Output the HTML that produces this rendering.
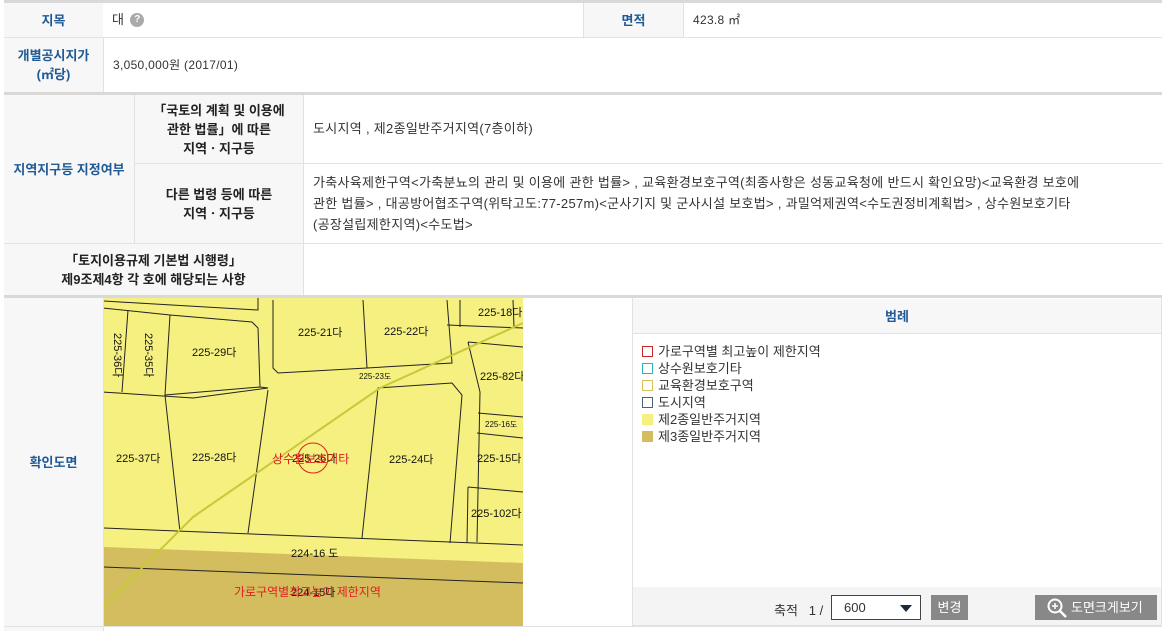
<!DOCTYPE html>
<html><head><meta charset="utf-8"><style>
*{margin:0;padding:0;box-sizing:border-box}
body{width:1168px;height:631px;background:#fff;font-family:"Liberation Sans","Noto Sans CJK KR",sans-serif;font-size:12px;color:#333;position:relative;overflow:hidden}
.a{position:absolute}
.h{position:absolute;background:#f7f7f7;color:#1f5a96;font-weight:bold;font-size:13px;display:flex;align-items:center;justify-content:center;text-align:center;line-height:19px}
.k{position:absolute;background:#f7f7f7;color:#222;font-weight:bold;font-size:13px;display:flex;align-items:center;justify-content:center;text-align:center;line-height:19px}
.v{position:absolute;display:flex;align-items:center;padding-left:9px;font-size:13px;letter-spacing:0.3px;color:#333;line-height:20px}
.hl{position:absolute;background:#e2e2e2}
.sq{display:inline-block;width:11px;height:11px;vertical-align:-1px;margin-right:5px}
.lg div{height:17px;line-height:17px;font-size:13px;color:#333}
</style></head><body>
<div class="hl" style="left:4px;top:0;width:1158px;height:3px;background:#d9d9d9"></div>
<div class="h" style="left:4px;top:3px;width:99px;height:34px">지목</div>
<div class="v" style="left:103px;top:3px;width:480px;height:34px">대 <span style="display:inline-block;width:14px;height:14px;border-radius:7px;background:#aaa;color:#fff;font-size:10px;text-align:center;line-height:14px;margin-left:6px;font-weight:bold;letter-spacing:0">?</span></div>
<div class="h" style="left:583px;top:3px;width:100px;height:34px;border-left:1px solid #e2e2e2">면적</div>
<div class="v" style="left:683px;top:3px;width:479px;height:34px;border-left:1px solid #e2e2e2;font-size:12px">423.8 ㎡</div>
<div class="hl" style="left:4px;top:37px;width:1158px;height:1px"></div>
<div class="h" style="left:4px;top:38px;width:99px;height:54px">개별공시지가<br>(㎡당)</div>
<div class="v" style="left:103px;top:38px;width:1059px;height:54px;border-left:1px solid #e2e2e2;font-size:12px">3,050,000원 (2017/01)</div>
<div class="hl" style="left:4px;top:92px;width:1158px;height:3px;background:#d9d9d9"></div>
<div class="h" style="left:4px;top:95px;width:130px;height:148px">지역지구등 지정여부</div>
<div class="k" style="left:134px;top:95px;width:169px;height:68px;border-left:1px solid #e2e2e2">「국토의 계획 및 이용에<br>관한 법률」에 따른<br>지역ㆍ지구등</div>
<div class="v" style="left:303px;top:95px;width:859px;height:68px;border-left:1px solid #e2e2e2">도시지역 , 제2종일반주거지역(7층이하)</div>
<div class="hl" style="left:134px;top:163px;width:1028px;height:1px"></div>
<div class="k" style="left:134px;top:164px;width:169px;height:79px;border-left:1px solid #e2e2e2">다른 법령 등에 따른<br>지역ㆍ지구등</div>
<div class="v" style="left:303px;top:164px;width:859px;height:79px;border-left:1px solid #e2e2e2;line-height:21px;white-space:nowrap"><div>가축사육제한구역&lt;가축분뇨의 관리 및 이용에 관한 법률&gt; , 교육환경보호구역(최종사항은 성동교육청에 반드시 확인요망)&lt;교육환경 보호에<br>관한 법률&gt; , 대공방어협조구역(위탁고도:77-257m)&lt;군사기지 및 군사시설 보호법&gt; , 과밀억제권역&lt;수도권정비계획법&gt; , 상수원보호기타<br>(공장설립제한지역)&lt;수도법&gt;</div></div>
<div class="hl" style="left:4px;top:243px;width:1158px;height:1px"></div>
<div class="k" style="left:4px;top:244px;width:299px;height:51px">「토지이용규제 기본법 시행령」<br>제9조제4항 각 호에 해당되는 사항</div>
<div class="v" style="left:303px;top:244px;width:859px;height:51px;border-left:1px solid #e2e2e2"></div>
<div class="hl" style="left:4px;top:295px;width:1158px;height:3px;background:#d9d9d9"></div>
<div class="h" style="left:4px;top:298px;width:99px;height:328px">확인도면</div>
<div class="a" style="left:103px;top:298px;width:1px;height:333px;background:#e2e2e2"></div>
<svg class="a" style="left:104px;top:298px" width="419" height="328" viewBox="0 0 419 328" font-family="Liberation Sans, Noto Sans CJK KR, sans-serif" font-size="11">
<rect width="419" height="328" fill="#f5f07f"/>
<polygon points="0,249 419,265 419,328 0,328" fill="#d4bd5f"/>
<g fill="none" stroke="#222" stroke-width="1">
<polyline points="-1,230 419,247"/>
<polyline points="-1,269 419,285"/>
<polyline points="76,234 61,97 66,17"/>
<polyline points="144,235 164,92"/>
<polyline points="258,240 274,90 348,85 358,97 346,245"/>
<polyline points="-1,94 89,100 164,90 156,89"/>
<polyline points="61,97 156,89 154,30 148,24 66,17 -1,10"/>
<polyline points="-1,3 154,12 154,0"/>
<polyline points="24,12 18,94"/>
<polyline points="169,2 169,70 174,75 263,70 348,65 343,2"/>
<polyline points="259,2 263,70"/>
<polyline points="364,44 376,94 373,244"/>
<polyline points="364,44 419,49"/>
<polyline points="343,27 419,30"/>
<polyline points="356,2 356,29"/>
<polyline points="409,2 410,29"/>
<polyline points="374,115 419,119"/>
<polyline points="373,135 419,140"/>
<polyline points="364,189 419,194"/>
<polyline points="364,189 363,245"/>
</g>
<polyline points="-1,309 89,219 276,90 419,25" fill="none" stroke="#c8c83a" stroke-width="2"/>
<g fill="#111">
<text x="374" y="18">225-18다</text>
<text x="194" y="38">225-21다</text>
<text x="280" y="37">225-22다</text>
<text x="88" y="58">225-29다</text>
<text x="255" y="81" font-size="8">225-23도</text>
<text x="376" y="82">225-82다</text>
<text x="381" y="129" font-size="8">225-16도</text>
<text x="12" y="164">225-37다</text>
<text x="88" y="163">225-28다</text>
<text x="188" y="164">225-26다</text>
<text x="285" y="165">225-24다</text>
<text x="373" y="164">225-15다</text>
<text x="367" y="219">225-102다</text>
<text x="187" y="259">224-16 도</text>
<text x="187" y="298">224-15다</text>
<text transform="translate(10,35) rotate(90)">225-36다</text>
<text transform="translate(41,35) rotate(90)">225-35다</text>
</g>
<circle cx="209" cy="160" r="15" fill="none" stroke="#e02020" stroke-width="1"/>
<g fill="#e02020" font-size="12"><text x="168" y="165">상수원보호기타</text><text x="130" y="298">가로구역별최고높이 제한지역</text></g>
</svg>
<div class="a" style="left:632px;top:298px;width:530px;height:328px;border:1px solid #e2e2e2;border-top:none"></div>
<div class="h" style="left:633px;top:299px;width:528px;height:35px;border-bottom:1px solid #e2e2e2">범례</div>
<div class="a lg" style="left:642px;top:343px">
<div><span class="sq" style="border:1px solid #c62828"></span>가로구역별 최고높이 제한지역</div>
<div><span class="sq" style="border:1px solid #26b5b5"></span>상수원보호기타</div>
<div><span class="sq" style="border:1px solid #d7c25a"></span>교육환경보호구역</div>
<div><span class="sq" style="border:1px solid #4a6272"></span>도시지역</div>
<div><span class="sq" style="background:#f5f07f"></span>제2종일반주거지역</div>
<div><span class="sq" style="background:#d4bd5f"></span>제3종일반주거지역</div>
</div>
<div class="a" style="left:633px;top:587px;width:528px;height:38px;background:#f4f4f4"></div>
<div class="a" style="left:774px;top:600px;font-size:13px;color:#333">축적 &nbsp; 1 /</div>
<div class="a" style="left:831px;top:595px;width:90px;height:25px;border:1px solid #444;background:#fff;font-size:13px;line-height:23px;padding-left:12px">600<span style="position:absolute;right:8px;top:9px;width:0;height:0;border-left:6px solid transparent;border-right:6px solid transparent;border-top:7px solid #1a2a3a"></span></div>
<div class="a" style="left:931px;top:595px;width:37px;height:25px;background:#888;color:#fff;font-size:13px;line-height:25px;text-align:center">변경</div>
<div class="a" style="left:1035px;top:595px;width:122px;height:25px;background:#888;color:#fff;font-size:13px;line-height:25px;padding-left:36px">도면크게보기
<svg style="position:absolute;left:12px;top:3px" width="22" height="20"><circle cx="8" cy="8" r="6.5" fill="none" stroke="#fff" stroke-width="2"/><path d="M13 13 L19 19" stroke="#fff" stroke-width="2.5"/><path d="M5 8h6M8 5v6" stroke="#fff" stroke-width="1.5"/></svg></div>
<div class="hl" style="left:4px;top:626px;width:1158px;height:1px"></div>
<div class="a" style="left:4px;top:627px;width:99px;height:4px;background:#f7f7f7"></div>
</body></html>
